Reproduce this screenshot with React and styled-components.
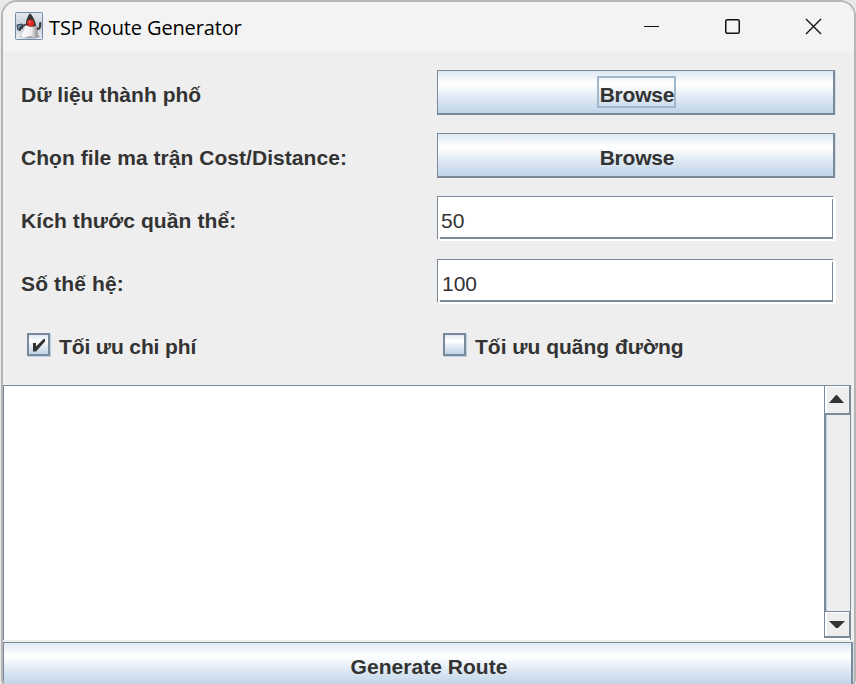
import React, { useState } from "react";
import styled, { createGlobalStyle } from "styled-components";

const line = "#7a8a99";
const ink = "#333333";
const metal = "linear-gradient(to bottom, #dde8f3 0%, #ffffff 29%, #ffffff 32%, #dde8f3 66%, #bfd4e8 100%)";

const GlobalStyle = createGlobalStyle`
  * { box-sizing: border-box; }
  html, body, #root { height: 100%; }
  body { margin: 0; overflow: hidden; background: #e9e9e9; }
`;

const Window = styled.main`
  width: 855px;
  height: 694px;
  margin-left: 1px;
  padding-bottom: 2px;
  display: flex;
  flex-direction: column;
  overflow: hidden;
  border: 2px solid #b5b5b5;
  border-radius: 16px;
  background: #eeeeee;
  color: ${ink};
  font: bold 21px/24px "Liberation Sans", Arial, sans-serif;
`;

const TitleBar = styled.header`
  flex: 0 0 50px;
  display: flex;
  align-items: center;
  padding: 0 28px 0 12px;
  background: #f3f3f3;
`;

const Title = styled.h1`
  flex: 1;
  margin: 0 0 0 6px;
  padding-top: 2px;
  color: #000;
  font: 400 20px/28px "Open Sans", "Noto Sans", sans-serif;
  letter-spacing: -0.14px;
`;

const Controls = styled.div`
  display: flex;
  gap: 57px;
  svg { display: block; }
`;

const Form = styled.section`
  flex: 0 0 333px;
  display: grid;
  grid-template-columns: 398px 398px;
  grid-auto-rows: 45px;
  gap: 18px;
  padding: 18px;
`;

const Label = styled.label`
  display: flex;
  align-items: center;
  padding-top: 5px;
  white-space: nowrap;
  letter-spacing: ${(p) => p.$spacing || "0.03px"};
`;

const MetalButton = styled.button`
  display: flex;
  justify-content: center;
  align-items: center;
  width: 100%;
  height: 45px;
  padding: 5px 0 0 3px;
  border: solid ${line};
  border-width: 1px 2px 2px 1px;
  background: ${metal};
  color: ${ink};
  font: inherit;
  outline: none;
  box-shadow: 1px 0 #d5dde5;
`;

const ButtonText = styled.span`
  height: 32px;
  margin: -5px 1px 0 0;
  padding: 5px 0 0 1px;
  border: 2px solid ${(p) => (p.$focused ? "#a3b8cc" : "transparent")};
  letter-spacing: ${(p) => p.$spacing || "-0.2px"};
`;

const FieldFrame = styled.div`
  position: relative;
  width: 396px;
  height: 43px;
  /* Bevel notches over the lower-left and upper-right corners. */
  &::before, &::after {
    content: "";
    position: absolute;
    width: 2px;
    height: 2px;
    background: #f6f6f6;
  }
  &::before { left: 1px; bottom: 0; }
  &::after { right: 0; top: 1px; width: 1px; }
`;

const Field = styled.input`
  display: block;
  width: 100%;
  height: 100%;
  padding: 8px 3px 0 ${(p) => p.$indent}px;
  border: solid ${line};
  border-width: 1px 1px 2px 1px;
  border-radius: 0;
  outline: none;
  box-shadow: 2px 2px #fff, 3px 2px #fff;
  background: #fff;
  color: ${ink};
  font: 400 21px/24px "Liberation Sans", Arial, sans-serif;
`;

const CheckLabel = styled(Label)`
  padding: 0 0 0 6px;
  gap: 9px;
`;

const CheckText = styled.span`
  padding-top: 5px;
`;

const Box = styled.button`
  flex: 0 0 23px;
  height: 23px;
  padding: 0;
  border: 2px solid ${line};
  background: ${metal};
  box-shadow: 1px 1px #b8cfe5;
  svg { display: block; }
`;

const Output = styled.section`
  flex: 0 0 255px;
  display: flex;
  width: 848px;
  border: solid ${line};
  border-width: 1px 1px 0 1px;
  background: #fff;
`;

const OutputText = styled.textarea`
  flex: 1;
  resize: none;
  border: 0;
  outline: 0;
  padding: 3px;
  background: #fff;
  color: ${ink};
  font: 400 20px "Liberation Mono", monospace;
`;

const ScrollBar = styled.div`
  width: 26px;
  height: 252px;
  display: flex;
  flex-direction: column;
  border-left: 1px solid ${line};
`;

const Arrow = styled.button`
  flex: 0 0 ${(p) => (p.$down ? 27 : 29)}px;
  display: grid;
  place-items: center;
  padding: ${(p) => (p.$down ? "2px 0 0" : "0 0 2px")};
  background: #eee;
  border: solid ${line};
  border-width: ${(p) => (p.$down ? "1px 1px 2px 0" : "0 1px 2px 0")};
  box-shadow: inset 2px 1px #fff;
`;

const Track = styled.div`
  flex: 1;
  border-left: 1px solid ${line};
  background: #eee;
  box-shadow: inset 1px 0 #b8cfe5;
`;

const Generate = styled(MetalButton)`
  flex: 0 0 45px;
  width: 850px;
  margin-top: 2px;
`;

function DukeIcon() {
  return (
    <svg width="28" height="28" viewBox="0 0 28 28" transform="translate(0 -1)" aria-hidden="true">
      <defs>
        <linearGradient id="tile" x2="0" y2="1">
          <stop stopColor="#e6e9ef" /><stop offset=".55" stopColor="#c5ccd8" /><stop offset="1" stopColor="#eef0f4" />
        </linearGradient>
        <linearGradient id="belly"><stop stopColor="#fff" /><stop offset=".6" stopColor="#eee" /><stop offset="1" stopColor="#8d8d8d" /></linearGradient>
      </defs>
      <rect x=".5" y=".5" width="27" height="27" rx="1" fill="url(#tile)" stroke="#6f8da9" />
      <ellipse cx="15" cy="24.5" rx="10" ry="2" fill="#a2a6ad" />
      <path d="M2 13l5-1 1 4-5 2z" fill="#6a9bc0" stroke="#2d3b48" />
      <path d="M10.5 13Q5 14 5 18M21 16q3 2 4-1l.3-4" fill="none" stroke="#3c3c3c" strokeWidth="2.2" strokeLinecap="round" />
      <path d="M14 2q1.2-1 2 .2Q20 7 21.5 15l-11-1Q11 7 14 2z" fill="#353535" />
      <path d="M10.5 13Q16 17 21 13.5 23.5 19 22.5 25q-3 2-6-1-4 0-6 1.500-5 .5-4-2 3-4 4-10.500z" fill="url(#belly)" />
      <circle cx="15.5" cy="11" r="3.5" fill="#dc2925" /><circle cx="14.7" cy="9.8" r="1.1" fill="#ff7168" />
    </svg>
  );
}

function Checkbox({ children, initial = false, spacing }) {
  const [checked, setChecked] = useState(initial);
  return (
    <CheckLabel $spacing={spacing}>
      <Box type="button" role="checkbox" aria-checked={checked} onClick={() => setChecked(!checked)}>
        {checked && (
          <svg width="19" height="19" viewBox="0 0 19 19">
            <path d="M4 8h3v3.5L14.5 4H16v2.500L7 16.500H4z" fill={ink} />
          </svg>
        )}
      </Box>
      <CheckText>{children}</CheckText>
    </CheckLabel>
  );
}

function TextField({ value, indent }) {
  return (
    <FieldFrame>
      <Field defaultValue={value} $indent={indent} />
    </FieldFrame>
  );
}

export default function App() {
  return (
    <>
      <GlobalStyle />
      <Window>
        <TitleBar>
          <DukeIcon />
          <Title>TSP Route Generator</Title>
          <Controls>
            <svg width="24" height="24"><path d="M4 11.5h15" stroke="#111" /></svg>
            <svg width="24" height="24"><rect x="4.75" y="4.75" width="13.5" height="13.5" rx="1.5" fill="none" stroke="#111" strokeWidth="1.5" /></svg>
            <svg width="24" height="24"><path d="M4 4l15 15M19 4L4 19" stroke="#111" strokeWidth="1.4" /></svg>
          </Controls>
        </TitleBar>
        <Form>
          <Label>Dữ liệu thành phố</Label>
          <MetalButton><ButtonText $focused>Browse</ButtonText></MetalButton>
          <Label $spacing="0.05px">Chọn file ma trận Cost/Distance:</Label>
          <MetalButton><ButtonText>Browse</ButtonText></MetalButton>
          <Label $spacing="0.1px">Kích thước quần thể:</Label>
          <TextField value="50" indent={3} />
          <Label $spacing="0.15px">Số thế hệ:</Label>
          <TextField value="100" indent={4} />
          <Checkbox initial spacing="-0.12px">Tối ưu chi phí</Checkbox>
          <Checkbox spacing="0">Tối ưu quãng đường</Checkbox>
        </Form>
        <Output>
          <OutputText />
          <ScrollBar>
            <Arrow><svg width="16" height="8"><path d="M0 8L7 0h1l7 8z" fill={ink} /></svg></Arrow>
            <Track />
            <Arrow $down><svg width="16" height="8"><path d="M0 0h16L9 7H7z" fill={ink} /></svg></Arrow>
          </ScrollBar>
        </Output>
        <Generate><ButtonText $spacing="0.03px">Generate Route</ButtonText></Generate>
      </Window>
    </>
  );
}
